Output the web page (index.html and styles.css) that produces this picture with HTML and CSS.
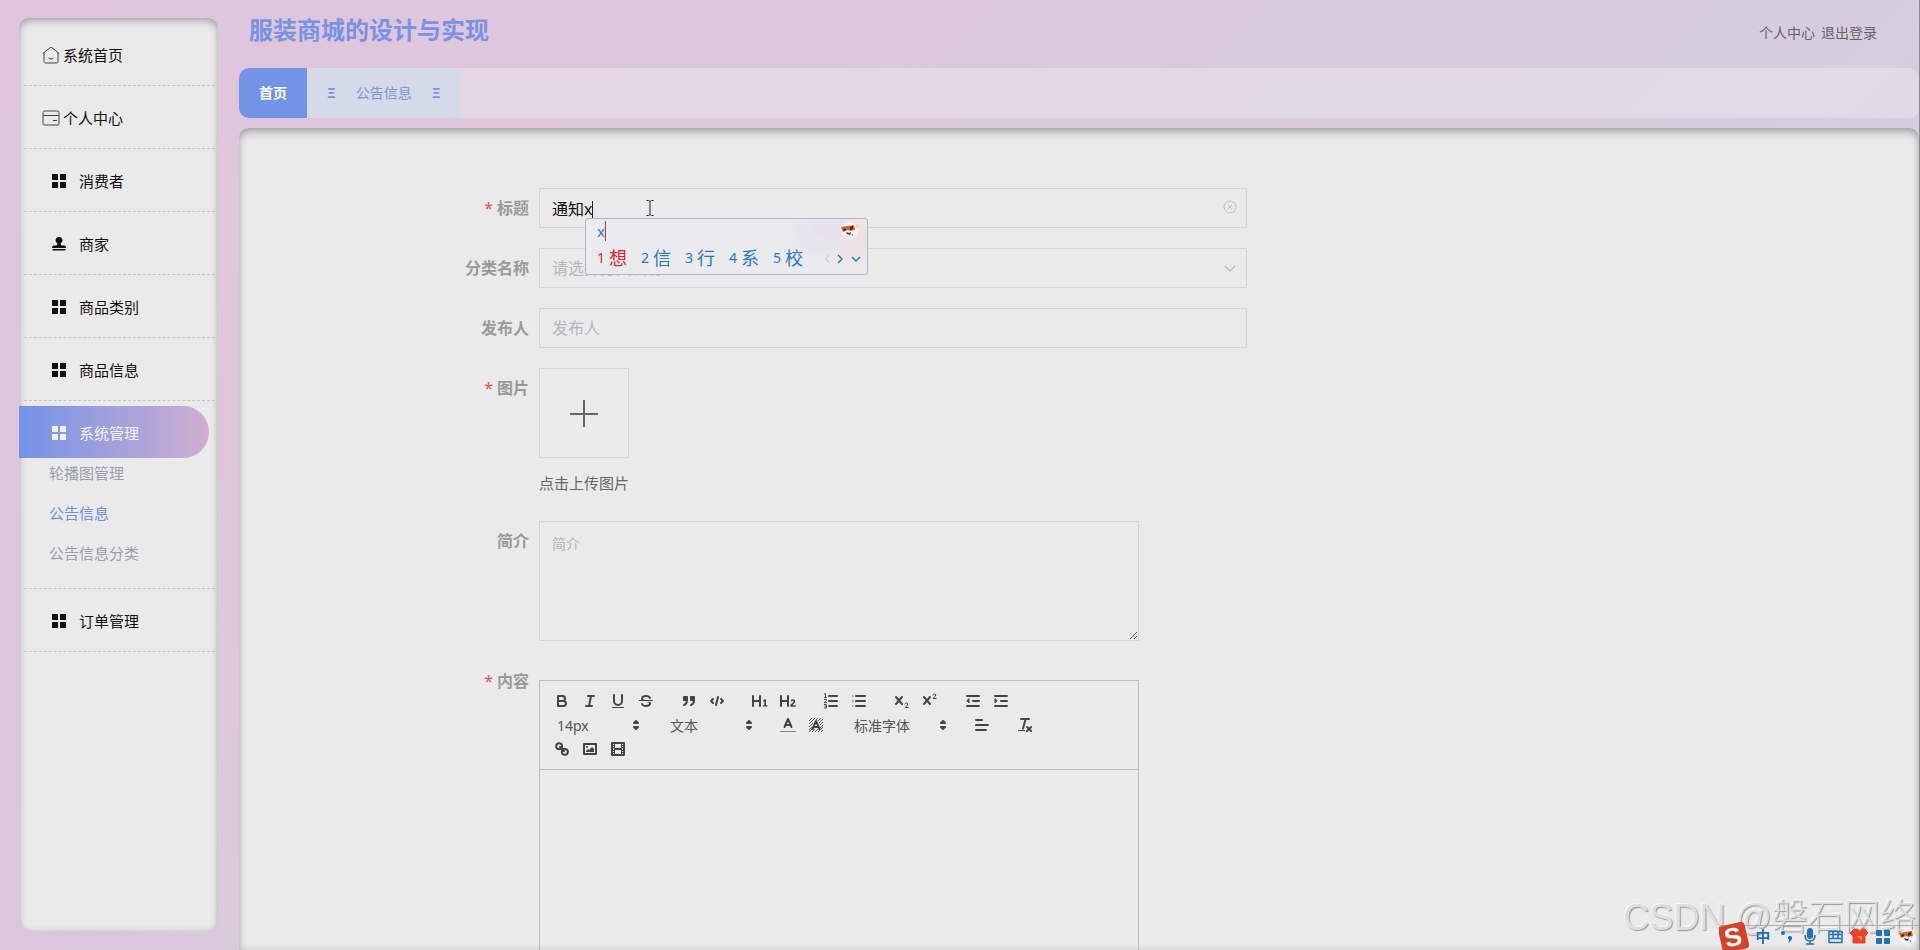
FILE: index.html
```
<!DOCTYPE html>
<html lang="zh-CN">
<head>
  <meta charset="UTF-8">
  <meta name="viewport" content="width=device-width, initial-scale=1.0">
  <title>服装商城的设计与实现</title>
  <link rel="stylesheet" href="styles.css">
</head>
<body>
  <!-- 公用图标 -->
  <svg class="sprite" aria-hidden="true">
    <symbol id="i-grid" viewBox="0 0 14 14"><path d="M0 0h6v6H0zM8 0h6v6H8zM0 8h6v6H0zM8 8h6v6H8z"/></symbol>
    <symbol id="i-updown" viewBox="0 0 18 18"><path class="st" d="M7 11l2 2 2-2zM7 7l2-2 2 2z"/></symbol>
    <symbol id="i-panda" viewBox="0 0 22 18">
      <circle cx="11" cy="9" r="8.5" fill="#f3f1f1"/>
      <path d="M16 3l3-1 2 2-2 3z" fill="#f2dc8a"/>
      <path d="M2 5l13-2 1 5-5 1-2-1-5 2z" fill="#c8683a"/>
      <path d="M4 7l3-1v2l-2 1zM11 5l3-1v3l-3 1z" fill="#4a2a20"/>
      <path d="M7 10l3 1 2-1-1 3-3-1z" fill="#3c3433"/>
      <path d="M13 12l1 2" stroke="#5b8fc4"/>
    </symbol>
  </svg>

  <!-- 侧边菜单 -->
  <aside class="sidebar">
    <ul class="menu">
      <li class="top">
        <a href="#">
          <svg viewBox="0 0 18 18" width="18" height="18" fill="none" stroke="#444"><path d="M.8 7.5L9 1l8.200 6.500M2 6.500v9q0 1.500 1.500 1.500h11q1.500 0 1.500-1.500v-9M6.500 12q2.500 2 5 0"/></svg>
          <span>系统首页</span>
        </a>
      </li>
      <li class="top">
        <a href="#">
          <svg viewBox="0 0 18 18" width="18" height="18" fill="none" stroke="#444"><rect x="1" y="2" width="16" height="14" rx="1.500"/><path d="M1 6.500h16M11 11.500h4"/></svg>
          <span>个人中心</span>
        </a>
      </li>
      <li><a href="#"><svg width="14" height="14"><use href="#i-grid"/></svg><span>消费者</span></a></li>
      <li>
        <a href="#">
          <svg viewBox="0 0 14 14" width="14" height="14"><path d="M7 0a3.300 3.300 0 0 1 2 6q-.5.5-.3 1.500.1.700 1.300 1h2.500Q14 8.800 14 11H0q0-2.200 1.500-2.500H4q1.200-.3 1.300-1Q5.500 6.500 5 6a3.300 3.300 0 0 1 2-6zM.5 12h13v1.500H.5z"/></svg>
          <span>商家</span>
        </a>
      </li>
      <li><a href="#"><svg width="14" height="14"><use href="#i-grid"/></svg><span>商品类别</span></a></li>
      <li><a href="#"><svg width="14" height="14"><use href="#i-grid"/></svg><span>商品信息</span></a></li>
      <li class="open">
        <a href="#"><svg width="14" height="14"><use href="#i-grid"/></svg><span>系统管理</span></a>
        <ul class="submenu">
          <li><a href="#">轮播图管理</a></li>
          <li><a href="#" class="active">公告信息</a></li>
          <li><a href="#">公告信息分类</a></li>
        </ul>
      </li>
      <li><a href="#"><svg width="14" height="14"><use href="#i-grid"/></svg><span>订单管理</span></a></li>
    </ul>
  </aside>

  <main class="main">
    <header class="header">
      <h1>服装商城的设计与实现</h1>
      <nav>
        <a href="#">个人中心</a>
        <a href="#">退出登录</a>
      </nav>
    </header>

    <nav class="tabs">
      <a href="#" class="home">首页</a>
      <a href="#" class="tab"><b>Ξ</b><span>公告信息</span><b>Ξ</b></a>
    </nav>

    <section class="panel">
      <form class="form">
        <div class="row">
          <label for="title" class="required">标题</label>
          <div class="field">
            <input type="text" id="title" value="通知x">
            <i class="caret"></i>
            <svg class="suffix" viewBox="0 0 14 14" width="14" height="14" fill="none" stroke="#bdbdbd"><circle cx="7" cy="7" r="6"/><path d="M5 5l4 4M9 5l-4 4"/></svg>

            <!-- 输入法候选框 -->
            <div class="ime">
              <div class="ime-code">x</div>
              <svg class="ime-logo" width="22" height="18"><use href="#i-panda"/></svg>
              <div class="ime-list">
                <span class="first"><small>1</small>想</span>
                <span><small>2</small>信</span>
                <span><small>3</small>行</span>
                <span><small>4</small>系</span>
                <span><small>5</small>校</span>
                <svg viewBox="0 0 38 12" width="38" height="12" fill="none" stroke="#2a7ab8" stroke-width="1.500"><path d="M6 3L3 7l3 4" stroke="#d4d4d4"/><path d="M15 3l4 4-4 4M29 5l4 4 4-4"/></svg>
              </div>
            </div>
            <svg class="pointer" viewBox="0 0 8 16" width="8" height="16" fill="none" stroke="#222"><path d="M.5.5h2L4 1.500 5.500.5h2M4 1.500v13M.5 15.500h2l1.500-1 1.500 1h2"/></svg>
          </div>
        </div>

        <div class="row">
          <label for="type">分类名称</label>
          <div class="field">
            <select id="type">
              <option>请选择分类名称</option>
            </select>
            <svg class="suffix" viewBox="0 0 14 14" width="14" height="14" fill="none" stroke="#bdbdbd" stroke-width="1.500"><path d="M2 6l5 5 5-5"/></svg>
          </div>
        </div>

        <div class="row">
          <label for="author">发布人</label>
          <div class="field"><input type="text" id="author" placeholder="发布人"></div>
        </div>

        <div class="row row-upload">
          <label for="upload" class="required">图片</label>
          <div class="field">
            <button type="button" id="upload" class="upload" aria-label="上传图片">
              <svg viewBox="0 0 28 28" width="28" height="28" stroke="#666" stroke-width="2"><path d="M14 1v27M0 15h28"/></svg>
            </button>
            <p class="tip">点击上传图片</p>
          </div>
        </div>

        <div class="row row-intro">
          <label for="intro">简介</label>
          <div class="field"><textarea id="intro" placeholder="简介"></textarea></div>
        </div>

        <div class="row">
          <label for="content" class="required">内容</label>
          <div class="field">
            <div class="editor">
              <div class="toolbar">
                <div class="group">
                  <button type="button" aria-label="粗体"><svg viewBox="0 0 18 18"><path class="st" d="M5 4h4.500a2.500 2.500 0 0 1 0 5H5zM5 9h5.500a2.500 2.500 0 0 1 0 5H5z"/></svg></button>
                  <button type="button" aria-label="斜体"><svg viewBox="0 0 18 18"><path class="st" d="M7 4h6M5 14h6M8 14l2-10"/></svg></button>
                  <button type="button" aria-label="下划线"><svg viewBox="0 0 18 18"><path class="st" d="M5 3v6a4.012 4.012 0 0 0 4 4 4.012 4.012 0 0 0 4-4V3"/><rect x="3" y="15" width="12" height="1"/></svg></button>
                  <button type="button" aria-label="删除线"><svg viewBox="0 0 18 18"><path class="st thin" d="M15.500 8.500h-13"/><path d="M9.007 8C6.542 7.791 6 7.519 6 6.500 6 5.792 7.283 5 9 5c1.571 0 2.765.679 2.969 1.309a1 1 0 0 0 1.900-.617C13.356 4.106 11.354 3 9 3 6.200 3 4 4.538 4 6.500a3.200 3.200 0 0 0 .5 1.843zM8.984 10C11.457 10.208 12 10.479 12 11.500c0 .708-1.283 1.500-3 1.500-1.571 0-2.765-.679-2.969-1.309a1 1 0 1 0-1.900.617C4.644 13.894 6.646 15 9 15c2.800 0 5-1.538 5-3.500a3.200 3.200 0 0 0-.5-1.843z"/></svg></button>
                </div>
                <div class="group">
                  <button type="button" aria-label="引用"><svg viewBox="0 0 18 18"><rect class="st" x="4" y="5" width="3" height="3"/><rect class="st" x="11" y="5" width="3" height="3"/><path d="M4 5h3v3H4zM11 5h3v3h-3z"/><path class="st" d="M7 8c0 4.031-3 5-3 5M14 8c0 4.031-3 5-3 5"/></svg></button>
                  <button type="button" aria-label="代码"><svg viewBox="0 0 18 18"><path class="st" d="M5 7L3 9l2 2M13 7l2 2-2 2M10 5l-2 8"/></svg></button>
                </div>
                <div class="group">
                  <button type="button" aria-label="标题1"><svg viewBox="0 0 18 18"><path d="M10 4v10a1 1 0 0 1-2 0v-4H3v4a1 1 0 0 1-2 0V4a1 1 0 0 1 2 0v4h5V4a1 1 0 0 1 2 0zm6.068 9.209H14.981V7.594a.392.392 0 0 0-.437-.426h-.535a.562.562 0 0 0-.424.200L12.224 8.585a.372.372 0 0 0 .009.600l.322.350c.185.200.333.167.574-.037l.184-.176v3.887H12.245a.392.392 0 0 0-.426.426v.428a.387.387 0 0 0 .426.417h3.823a.387.387 0 0 0 .426-.417v-.428a.392.392 0 0 0-.426-.426z"/></svg></button>
                  <button type="button" aria-label="标题2"><svg viewBox="0 0 18 18"><path d="M16.739 13.814v.432a.393.393 0 0 1-.437.426h-4.500a.394.394 0 0 1-.437-.426V13.900a2.280 2.280 0 0 1 .350-1.300c.7-1.200 2.900-1.900 2.900-3.100a.690.690 0 0 0-.770-.700.947.947 0 0 0-.840.500c-.140.240-.300.300-.600.130l-.500-.300c-.240-.140-.300-.330-.130-.600A2.400 2.400 0 0 1 13.920 7.200c1.200 0 2.400.700 2.400 2.200 0 1.800-2.500 2.700-2.700 3.900h2.700a.4.4 0 0 1 .420.514zM9 3a.990.990 0 0 0-1 1v4H3V4a1 1 0 0 0-2 0v10a1 1 0 0 0 2 0v-4h5v4a1 1 0 0 0 2 0V4a1 1 0 0 0-1-1z"/></svg></button>
                </div>
                <div class="group">
                  <button type="button" aria-label="有序列表"><svg viewBox="0 0 18 18"><path class="st" d="M7 4h8M7 9h8M7 14h8"/><path class="st thin" d="M2.500 5.500h2M3.500 5.500v-4l-1 .5M2.300 7.500h2v1l-2 2.200h2.200M2.300 12.500h2v3.500h-2M3 14.200h1.200"/></svg></button>
                  <button type="button" aria-label="无序列表"><svg viewBox="0 0 18 18"><path class="st" d="M6 4h9M6 9h9M6 14h9"/><path class="st thin" d="M2.500 4h.5M2.500 9h.5M2.500 14h.5"/></svg></button>
                </div>
                <div class="group">
                  <button type="button" aria-label="下标"><svg viewBox="0 0 18 18"><path class="st" d="M3 5l6 7M9 5l-6 7"/><path class="st thin" d="M12 12q.3-1 1.500-1t1.400 1q0 .8-2.800 3.500h3.100"/></svg></button>
                  <button type="button" aria-label="上标"><svg viewBox="0 0 18 18"><path class="st" d="M3 5l6 7M9 5l-6 7"/><path class="st thin" d="M12 3q.3-1 1.500-1t1.400 1q0 .8-2.800 3.500h3.100"/></svg></button>
                </div>
                <div class="group">
                  <button type="button" aria-label="减少缩进"><svg viewBox="0 0 18 18"><path class="st" d="M3 14h12M3 4h12M9 9h6"/><path d="M5 7v4L3 9z" class="st thin"/><path d="M5 7v4L3 9z"/></svg></button>
                  <button type="button" aria-label="增加缩进"><svg viewBox="0 0 18 18"><path class="st" d="M3 14h12M3 4h12M9 9h6"/><path d="M3 7v4l2-2z" class="st thin"/><path d="M3 7v4l2-2z"/></svg></button>
                </div>
                <div class="group picker">
                  <select aria-label="字号"><option>14px</option></select>
                  <svg viewBox="0 0 18 18"><use href="#i-updown"/></svg>
                </div>
                <div class="group picker">
                  <select aria-label="段落"><option>文本</option></select>
                  <svg viewBox="0 0 18 18"><use href="#i-updown"/></svg>
                </div>
                <div class="group">
                  <button type="button" aria-label="文字颜色"><svg viewBox="0 0 18 18"><rect x="1" y="15" width="16" height="1" opacity=".6"/><path class="st" d="M5.500 11L9 3l3.500 8M6.500 9h5"/></svg></button>
                  <button type="button" aria-label="背景颜色"><svg viewBox="0 0 18 18"><path class="hatch" d="M2 5l3-3M2 8l6-6M2 11l4-4M2 14l3-3M2 16l3-3M5 16l3-3M8 16l3-3M11 16l5-5M14 16l2-2M9 4l2-2M11 5l3-3M12 7l4-4M13 9l3-3M13 12l3-3"/><path class="st" d="M5.500 13L9 5l3.500 8M6.500 11h5"/></svg></button>
                </div>
                <div class="group picker wide">
                  <select aria-label="字体"><option>标准字体</option></select>
                  <svg viewBox="0 0 18 18"><use href="#i-updown"/></svg>
                </div>
                <div class="group">
                  <button type="button" aria-label="对齐"><svg viewBox="0 0 18 18"><path class="st" d="M3 9h12M3 14h10M3 4h6"/></svg></button>
                </div>
                <div class="group">
                  <button type="button" aria-label="清除格式"><svg viewBox="0 0 18 18"><path class="st" d="M5 3h8M9.500 3.500l-2.500 9M11 11l4 4M15 11l-4 4"/><rect x="2" y="14" width="7" height="1"/></svg></button>
                </div>
                <div class="group">
                  <button type="button" aria-label="链接"><svg viewBox="0 0 18 18"><path class="st" d="M7 7l4 4M9.100 5.600a3 3 0 1 0-3.500 3.500 3 3 0 0 0 3.500-3.500zM8.900 12.400a3 3 0 1 0 3.500-3.500 3 3 0 0 0-3.500 3.500z"/></svg></button>
                  <button type="button" aria-label="图片"><svg viewBox="0 0 18 18"><rect class="st" x="3" y="4" width="12" height="10"/><circle cx="6" cy="7" r="1"/><path d="M5 12v-1l2-2 1 1 3-3 2 2v3z"/></svg></button>
                  <button type="button" aria-label="视频"><svg viewBox="0 0 18 18"><rect class="st" x="3" y="3" width="12" height="12"/><path d="M5 3h1v12H5zM12 3h1v12h-1zM5 8h8v2H5zM3 5h3v1H3zM3 7h3v1H3zM3 10h3v1H3zM3 12h3v1H3zM12 5h3v1h-3zM12 7h3v1h-3zM12 10h3v1h-3zM12 12h3v1h-3z"/></svg></button>
                </div>
              </div>
              <div class="content" id="content" contenteditable="true" role="textbox"></div>
            </div>
          </div>
        </div>
      </form>
    </section>
  </main>

  <div class="watermark">CSDN @磐石网络</div>

  <!-- 输入法状态栏 -->
  <div class="imebar">
    <svg viewBox="0 0 200 28" width="200" height="28">
      <path d="M0 3.500h200" stroke="#a9b0b6"/>
      <g transform="rotate(-13 14 15)">
        <rect x="1" y="2" width="27" height="27" rx="4" fill="#d3452b"/>
        <text class="logo-s" x="14" y="24" text-anchor="middle">S</text>
      </g>
      <text class="zh" x="44" y="20" text-anchor="middle">中</text>
      <g fill="#1f72b5">
        <circle cx="64" cy="11" r="2"/>
        <path d="M69 15a2.200 2.200 0 1 1 3 3q-.5 2-3 3 1.500-2 1-3.500a2 2 0 0 1-1-2.500z"/>
        <rect x="88" y="6" width="6" height="11" rx="3"/>
        <path d="M86 13q0 6 5 6t5-6M91 19v3M87 22h8" fill="none" stroke="#1f72b5" stroke-width="1.500"/>
        <path d="M158 9h4v4h-4zM166 9h4v4h-4zM158 17h4v4h-4zM166 17h4v4h-4z" stroke="#1f72b5" stroke-width="2" stroke-linejoin="round"/>
      </g>
      <path d="M110 9.500h13v11h-13zM111 12.500h11M111 16.500h11M114 10v7M119 10v7" fill="none" stroke="#1f72b5" stroke-width="1.500" stroke-linejoin="round"/>
      <path d="M135 7l3 0q3 3 5 0l3 0 3 4-3 3v7h-12v-7l-3-3z" fill="#e8452c" stroke="#e8452c" stroke-linejoin="round"/>
      <path d="M138 14h5v5z" fill="#f28a35"/>
      <use href="#i-panda" x="178" y="6" width="22" height="18"/>
    </svg>
  </div>
</body>
</html>
```
FILE: styles.css
```
* { box-sizing: border-box; margin: 0; padding: 0; }

body {
  display: flex;
  height: 100vh;
  overflow: hidden;
  padding-left: 19px;
  border-right: 1px solid #8c8a92;
  background: linear-gradient(135deg, #e0c5dd 0%, #dcc7dc 33%, #d5cde0 67%, #d2d0e2 100%);
  font-family: "Noto Sans", "Noto Sans CJK SC", sans-serif;
  font-size: 14px;
  color: #666;
}

ul { list-style: none; }
a { text-decoration: none; color: inherit; }
input, select, textarea, button { font: inherit; color: inherit; background: none; border: none; outline: none; }

.sprite { position: absolute; width: 0; height: 0; }

/* 侧边栏 */
.sidebar {
  flex: 0 0 199px;
  margin: 18px 21px 19px 0;
  padding: 5px 3px 0 5px;
  border-radius: 10px;
  background: #eaeaea;
  box-shadow: inset 0 5px 10px -2px rgba(0,0,0,0.25), inset 0 0 6px rgba(0,0,0,0.15);
}

.menu > li {
  border-bottom: 1px dashed #c4c8c4;
  font-size: 15px;
  color: #111;
}

.menu > li > a {
  display: flex;
  align-items: center;
  gap: 13px;
  height: 62px;
  padding-left: 28px;
}

.menu > .top > a { padding-left: 18px; gap: 3px; }

.menu > .open { padding-top: 5px; }

.menu > .open > a {
  height: 52px;
  margin: 0 6px 0 -5px;
  padding-left: 33px;
  border-radius: 0 26px 26px 0;
  background: linear-gradient(90deg, #7393e6, #d0aed2);
  color: #f2f2f8;
}

.menu svg { fill: currentColor; margin-top: 2px; }
.menu .top svg { fill: none; }

.submenu { padding: 0 0 20px 25px; }
.submenu li { line-height: 30px; color: #9a9eae; }
.submenu li + li { margin-top: 10px; }
.submenu .active { color: #7090dc; }

/* 右侧 */
.main {
  flex: 1;
  min-width: 0;
  display: flex;
  flex-direction: column;
}

.header {
  display: flex;
  justify-content: space-between;
  align-items: center;
  height: 68px;
  padding: 0 42px 8px 10px;
}

.header h1 { font-size: 24px; line-height: 36px; color: #7893e2; }
.header nav { display: flex; gap: 6px; padding-top: 4px; }

.tabs {
  display: flex;
  height: 50px;
  margin-bottom: 10px;
  border-radius: 10px;
  overflow: hidden;
  background: rgba(236,236,236,0.45);
  line-height: 50px;
}

.tabs .home {
  width: 68px;
  text-align: center;
  font-weight: bold;
  color: #fff;
  background: #7393e6;
}

.tabs .tab {
  display: flex;
  gap: 20px;
  padding: 0 20px;
  color: #7c93d4;
  background: #d5dae9;
}

.panel {
  flex: 1;
  min-height: 0;
  overflow: hidden;
  padding-top: 60px;
  border-radius: 10px 10px 0 0;
  background: #eaeaea;
  box-shadow: inset 0 6px 10px -2px rgba(0,0,0,0.25), inset 0 0 6px rgba(0,0,0,0.15);
}

/* 表单 */
.form { width: 60%; }

.row { display: flex; margin-bottom: 20px; }
.row-upload { margin-bottom: 23px; }

.row > label {
  flex: 0 0 300px;
  padding-right: 10px;
  text-align: right;
  font-size: 16px;
  font-weight: bold;
  line-height: 40px;
  color: #9a9a9a;
}

.required::before { content: "*"; margin-right: 4px; font-weight: normal; color: #e0525a; }

.field { position: relative; flex: 1; min-width: 0; }

.field > input,
.field > select {
  display: block;
  width: 100%;
  height: 40px;
  padding: 0 12px;
  border: 1px solid #d6d6d6;
  font-size: 16px;
  appearance: none;
}

#title { color: #111; }
.field > select { color: #b4b6bc; }
::placeholder { color: #b4b6bc; }

.suffix { position: absolute; top: 12px; right: 10px; }
.caret { position: absolute; top: 13px; left: 53px; width: 1px; height: 17px; background: #222; }
.pointer { position: absolute; top: 12px; left: 107px; }

.upload {
  display: flex;
  align-items: center;
  justify-content: center;
  width: 90px;
  height: 90px;
  border: 1px solid #d6d6d6;
}

.tip { padding-top: 10px; font-size: 15px; line-height: 30px; }

.field > textarea {
  display: block;
  width: 600px;
  max-width: 100%;
  height: 120px;
  padding: 12px;
  border: 1px solid #d6d6d6;
  line-height: 20px;
}

/* 富文本编辑器 */
.editor { width: 600px; max-width: 100%; margin-top: 19px; border: 1px solid #bdbdbd; }

.toolbar {
  display: flex;
  flex-wrap: wrap;
  padding: 8px;
  border-bottom: 1px solid #bdbdbd;
}

.group { display: flex; height: 24px; margin-right: 15px; }
.group button { width: 28px; height: 24px; padding: 3px 5px; }
.group svg { display: block; width: 18px; height: 18px; fill: #444; }
.st { fill: none; stroke: #444; stroke-width: 2; stroke-linecap: round; stroke-linejoin: round; }
.thin { stroke-width: 1; }
.hatch { fill: none; stroke: #555; }

.picker { position: relative; width: 98px; }
.picker.wide { width: 108px; }
.picker select { width: 100%; padding-left: 9px; appearance: none; color: #555; }
.picker svg { position: absolute; top: 3px; right: 1px; pointer-events: none; }

.content { height: 300px; outline: none; }

/* 输入法 */
.ime {
  position: absolute;
  z-index: 5;
  top: 30px;
  left: 46px;
  width: 283px;
  height: 57px;
  padding: 2px 6px 0 11px;
  border: 1px solid #a8b8cc;
  border-radius: 3px;
  background: radial-gradient(circle at 235px 10px, #e4e0ec 0, rgba(234,234,236,0) 40px), radial-gradient(circle at 275px 20px, #f0dfe2 0, rgba(236,234,236,0) 40px), #ebebed;
  color: #2a7ab8;
}

.ime-code { width: 9px; border-right: 1px solid #d33; font-size: 15px; line-height: 20px; }
.ime-logo { position: absolute; top: 3px; right: 6px; }
.ime-list { display: flex; align-items: center; gap: 14px; font-size: 18px; line-height: 34px; }
.ime-list span { display: flex; gap: 4px; }
.ime-list small { font-size: 14px; }
.ime-list .first { color: #d6262b; }
.ime-list svg { margin-left: auto; }

.watermark {
  position: fixed;
  right: 4px;
  bottom: 6px;
  font: 300 36px/52px "Liberation Sans", "Noto Sans CJK SC", sans-serif;
  color: #dedede;
  text-shadow: 1px 1px 1px #999, -1px -1px 0 #f6f6f6;
}

.imebar { position: fixed; right: 1px; bottom: 0; height: 28px; }
.logo-s { fill: #fff; font: bold 26px "Liberation Sans", sans-serif; }
.zh { fill: #1f72b5; font: bold 15px "Noto Sans CJK SC", sans-serif; }
```
